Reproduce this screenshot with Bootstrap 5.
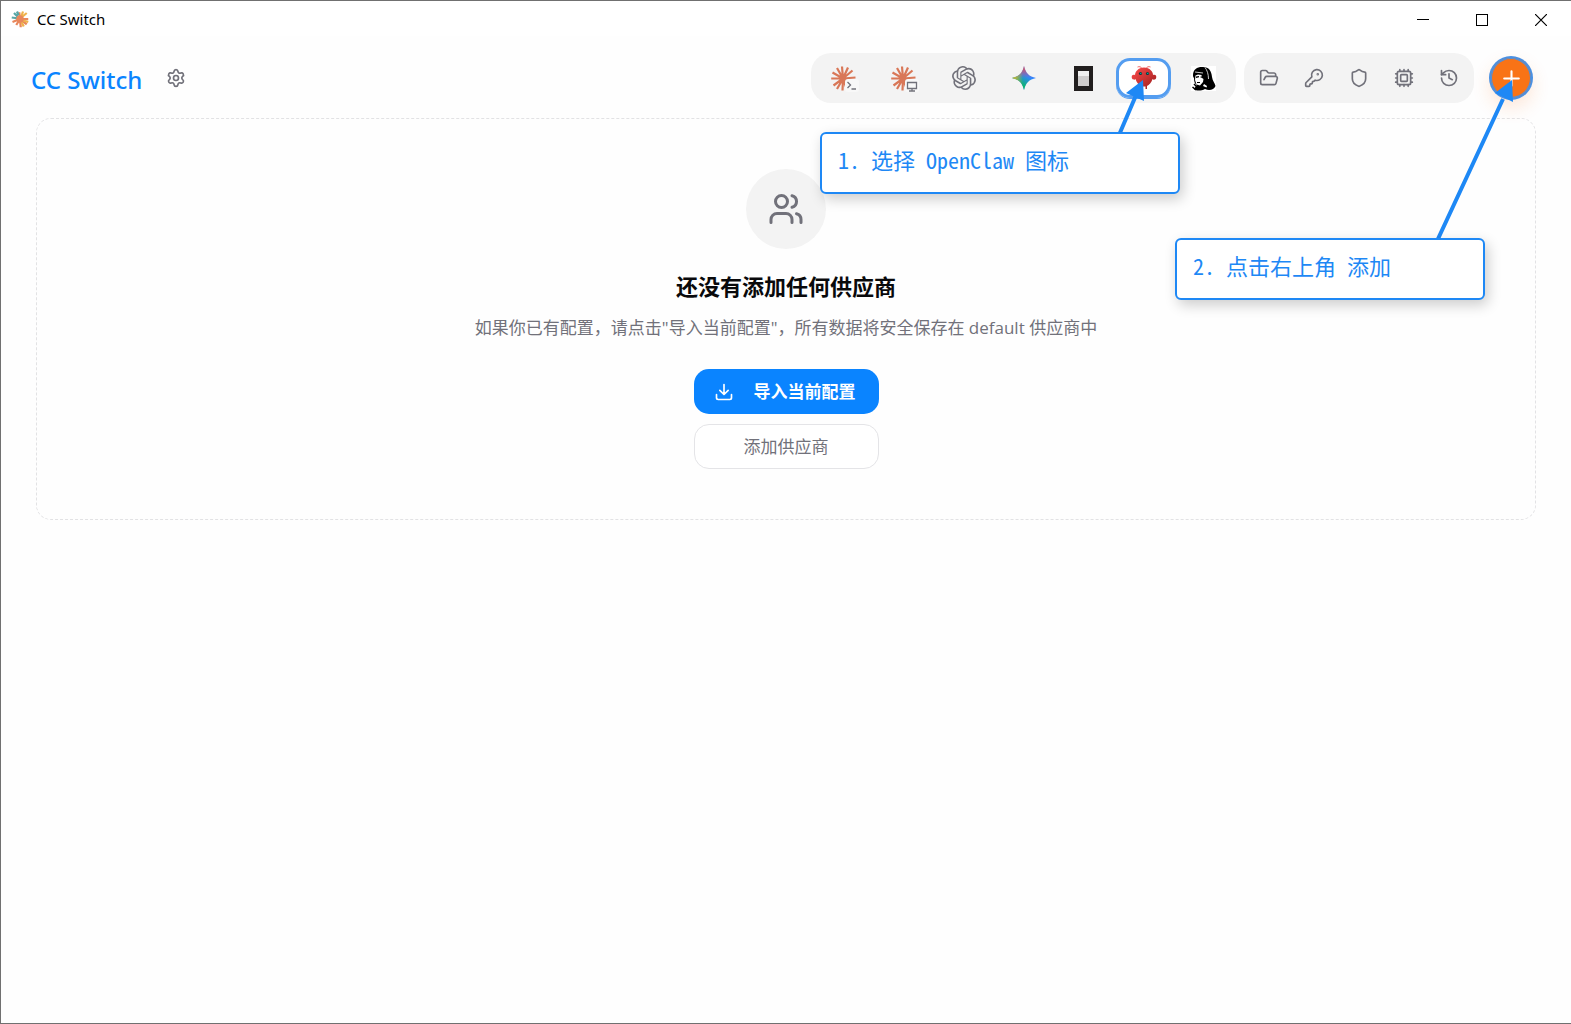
<!DOCTYPE html>
<html lang="zh-CN">
<head>
<meta charset="utf-8">
<meta name="viewport" content="width=device-width, initial-scale=1">
<title>CC Switch</title>
<link href="https://cdn.jsdelivr.net/npm/bootstrap@5.3.0/dist/css/bootstrap.min.css" rel="stylesheet">
<style>
:root{--ink:#71717a;--blue:#0a84ff;--note:#1e88f5;--soft:#f3f3f3}
body{font-family:"Open Sans","Noto Sans CJK SC",sans-serif;background:#fefefe;color:#09090b}
.app-window{min-height:100vh;border:solid #707070;border-width:1px 0 1px 1px}
.title-bar{height:35px;padding-left:10px;background:#fff}
.title-text{font:15px/20px "Noto Sans",sans-serif;color:#000}
.win-btn{width:59px;height:35px;padding:0 2px 0 0;border:0;background:none;color:#000}
.app-header{padding:17px 40px 15px 30px}
.brand{font:500 24px/32px "Noto Sans","Open Sans",sans-serif;padding-top:3px;color:var(--blue);text-decoration:none}
.tool-group{background:var(--soft);border-radius:20px;padding:5px;gap:5px}
.icon-btn{width:40px;height:40px;padding:0;border:0;border-radius:12px;background:none;color:var(--ink);display:flex;align-items:center;justify-content:center}
.gear-btn{margin-left:14px}
.app-btn{width:55px}
.app-btn.active{background:#fff;border-radius:14px;box-shadow:0 1px 0 0 #549df0,inset 0 0 0 3px #549df0}
.add-btn{border-radius:50%;margin-left:9px;background:#f97316;color:#fff;box-shadow:0 0 0 2px #4a90e2,inset 0 0 0 1px #4a90e2,0 8px 18px 2px rgba(249,115,22,.16)}
.line-icon{fill:none;stroke:currentColor;stroke-width:2;stroke-linecap:round;stroke-linejoin:round}
.empty-panel{margin:0 35px;padding:50px 20px;border:1px dashed #e2e2e4;border-radius:15px}
.empty-icon{width:80px;height:80px;background:var(--soft);color:var(--ink)}
.empty-title{font-size:22px;line-height:34px;font-weight:700;margin:20px 0 10px}
.empty-text{font-size:17px;line-height:30px;color:var(--ink);margin:0 0 26px}
.action-list{gap:10px}
.action-btn{width:185px;height:45px;padding:0 19px;border-radius:15px;font-size:17px;line-height:24px}
.btn-main{background:var(--blue);color:#fff;gap:20px;font-weight:700}
.btn-line{border:1px solid #e4e4e7;background:#fff;color:var(--ink)}
.callout-box{position:absolute;z-index:3;height:62px;padding:0 16px;border:2px solid var(--note);border-radius:6px;background:#fff;color:var(--note);box-shadow:3px 5px 14px rgba(0,0,0,.2);font:22px/50px "Noto Sans CJK SC",sans-serif;font-feature-settings:"hwid"}
.callout-pick{right:391px;top:131px;width:360px}
.callout-add{right:86px;top:237px;width:310px}
.arrows{position:absolute;right:40px;top:60px;z-index:2;pointer-events:none}
</style>
<script src="https://cdn.jsdelivr.net/npm/bootstrap@5.3.0/dist/js/bootstrap.bundle.min.js"></script>
</head>
<body>
<svg width="0" height="0" class="position-absolute" aria-hidden="true">
  <defs>
    <g id="burst" stroke="#d97757" stroke-width="2.200" stroke-linecap="butt">
      <path d="M12 12.500 11 .5M12 12.500 17 1.500M12 12.500 21.500 4.500M12 12.500 24.500 11.500M12 12.500 23.500 15.500M12 12.500 20 20.500M12 12.500 16 23.500M12 12.500 11.500 24.500M12 12.500 6 23M12 12.500 2.500 19.500M12 12.500 .2 12.500M12 12.500 1.500 6.500M12 12.500 6 2"/>
    </g>
    <linearGradient id="redBody" x1="0" y1="0" x2="1" y2="1"><stop offset="0" stop-color="#ff4d4d"/><stop offset="1" stop-color="#991b1b"/></linearGradient>
    <linearGradient id="gemRed" x1="0" y1="0" x2="0" y2="1"><stop offset="0" stop-color="#f94543"/><stop offset=".5" stop-color="#f94543" stop-opacity="0"/></linearGradient>
    <linearGradient id="gemYellow" x1="0" y1="0" x2="1" y2="0"><stop offset="0" stop-color="#fabc12"/><stop offset=".45" stop-color="#fabc12" stop-opacity="0"/></linearGradient>
    <linearGradient id="gemGreen" x1=".2" y1="1" x2=".6" y2=".3"><stop offset=".3" stop-color="#08b962"/><stop offset=".9" stop-color="#08b962" stop-opacity="0"/></linearGradient>
    <linearGradient id="frameFill" x1="0" y1="0" x2="0" y2="1"><stop offset="0" stop-color="#f0f0f0"/><stop offset=".35" stop-color="#f0f0f0"/><stop offset=".36" stop-color="#cfcdcd"/><stop offset="1" stop-color="#cfcdcd"/></linearGradient>
  </defs>
</svg>

<div class="app-window position-relative">
  <div class="title-bar d-flex align-items-center">
    <svg width="18" height="18" viewBox="0 0 24 24" stroke-width="3" aria-hidden="true">
      <path stroke="#e8875c" d="M12 12 11 3M12 12 23 12M12 12 21 19M12 12 13 23M12 12 2 16M12 12 7 20"/>
      <path stroke="#58a6a6" d="M9 9 4 4M8 11 1 10M10 7 8 2"/>
      <path stroke="#efb24c" d="M14 8 16 2M15 9 21 4M16 14 23 16M14 16 17 22"/>
      <circle cx="12" cy="12" r="5" fill="#e8875c"/>
    </svg>
    <span class="title-text ms-2 me-auto">CC Switch</span>
    <button class="win-btn" type="button" aria-label="最小化"><svg width="12" height="12" shape-rendering="crispEdges"><path d="M0 5.500H12" stroke="currentColor"/></svg></button>
    <button class="win-btn" type="button" aria-label="最大化"><svg width="12" height="12" shape-rendering="crispEdges"><path d="M.5 .5H11.500V11.500H.5Z" fill="none" stroke="currentColor"/></svg></button>
    <button class="win-btn" type="button" aria-label="关闭"><svg width="12" height="12"><path d="M0 0 12 12M12 0 0 12" stroke="currentColor" stroke-width="1.200"/></svg></button>
  </div>

  <header class="app-header d-flex align-items-center">
    <a class="brand" href="#">CC Switch</a>
    <button class="icon-btn gear-btn me-auto" type="button" aria-label="设置">
      <svg class="line-icon" width="20" height="20" viewBox="0 0 24 24"><path d="M9.671 4.136a2.340 2.340 0 0 1 4.659 0 2.340 2.340 0 0 0 3.319 1.915 2.340 2.340 0 0 1 2.330 4.033 2.340 2.340 0 0 0 0 3.831 2.340 2.340 0 0 1-2.330 4.033 2.340 2.340 0 0 0-3.319 1.915 2.340 2.340 0 0 1-4.659 0 2.340 2.340 0 0 0-3.320-1.915 2.340 2.340 0 0 1-2.330-4.033 2.340 2.340 0 0 0 0-3.831A2.340 2.340 0 0 1 6.350 6.051a2.340 2.340 0 0 0 3.319-1.915"/><circle cx="12" cy="12" r="3"/></svg>
    </button>

    <nav class="tool-group d-flex me-2" aria-label="应用">
      <button class="icon-btn app-btn" type="button" aria-label="Claude Code">
        <svg width="30" height="28" viewBox="-2 -2 30 28"><use href="#burst"/><rect x="14" y="13" width="14" height="13" rx="3" fill="#f8f8f8"/><path d="M16.500 16 19.500 19 16.500 22M20.500 23H25" fill="none" stroke="#71717a" stroke-width="1.300"/></svg>
      </button>
      <button class="icon-btn app-btn" type="button" aria-label="Claude Desktop">
        <svg width="30" height="28" viewBox="-2 -2 30 28"><use href="#burst"/><rect x="14" y="13" width="14" height="13" rx="3" fill="#f8f8f8"/><path d="M16.500 16.500H25.500V22.500H16.500ZM21 22.500V25M18 25H24" fill="none" stroke="#71717a" stroke-width="1.300"/></svg>
      </button>
      <button class="icon-btn app-btn" type="button" aria-label="Codex">
        <svg width="24" height="24" viewBox="0 0 24 24" fill="currentColor"><path d="M22.2819 9.8211a5.9847 5.9847 0 0 0-.5157-4.9108 6.0462 6.0462 0 0 0-6.5098-2.9A6.0651 6.0651 0 0 0 4.9807 4.1818a5.9847 5.9847 0 0 0-3.9977 2.9 6.0462 6.0462 0 0 0 .7427 7.0966 5.98 5.98 0 0 0 .511 4.9107 6.051 6.051 0 0 0 6.5146 2.9001A5.9847 5.9847 0 0 0 13.2599 24a6.0557 6.0557 0 0 0 5.7718-4.2058 5.9894 5.9894 0 0 0 3.9977-2.9001 6.0557 6.0557 0 0 0-.7475-7.0729zm-9.022 12.6081a4.4755 4.4755 0 0 1-2.8764-1.0408l.1419-.0804 4.7783-2.7582a.7948.7948 0 0 0 .3927-.6813v-6.7369l2.02 1.1686a.071.071 0 0 1 .038.052v5.5826a4.504 4.504 0 0 1-4.4945 4.4944zm-9.6607-4.1254a4.4708 4.4708 0 0 1-.5346-3.0137l.142.0852 4.783 2.7582a.7712.7712 0 0 0 .7806 0l5.8428-3.3685v2.3324a.0804.0804 0 0 1-.0332.0615L9.74 19.9502a4.4992 4.4992 0 0 1-6.1408-1.6464zM2.3408 7.8956a4.485 4.485 0 0 1 2.3655-1.9728V11.6a.7664.7664 0 0 0 .3879.6765l5.8144 3.3543-2.0201 1.1685a.0757.0757 0 0 1-.071 0l-4.8303-2.7865A4.504 4.504 0 0 1 2.3408 7.872zm16.5963 3.8558L13.1038 8.364 15.1192 7.2a.0757.0757 0 0 1 .071 0l4.8303 2.7913a4.4944 4.4944 0 0 1-.6765 8.1042v-5.6772a.79.79 0 0 0-.407-.667zm2.0107-3.0231l-.142-.0852-4.7735-2.7818a.7759.7759 0 0 0-.7854 0L9.409 9.2297V6.8974a.0662.0662 0 0 1 .0284-.0615l4.8303-2.7866a4.4992 4.4992 0 0 1 6.6802 4.66zM8.3065 12.863l-2.02-1.1638a.0804.0804 0 0 1-.038-.0567V6.0742a4.4992 4.4992 0 0 1 7.3757-3.4537l-.142.0805L8.704 5.459a.7948.7948 0 0 0-.3927.6813zm1.0976-2.3654l2.602-1.4998 2.6069 1.4998v2.9994l-2.5974 1.4997-2.6067-1.4997Z"/></svg>
      </button>
      <button class="icon-btn app-btn" type="button" aria-label="Gemini">
        <svg width="24" height="24" viewBox="0 0 24 24"><path fill="#3186ff" d="M12 0C13.500 7 17 10.500 24 12 17 13.500 13.500 17 12 24 10.500 17 7 13.500 0 12 7 10.500 10.500 7 12 0Z"/><path fill="url(#gemGreen)" d="M12 0C13.500 7 17 10.500 24 12 17 13.500 13.500 17 12 24 10.500 17 7 13.500 0 12 7 10.500 10.500 7 12 0Z"/><path fill="url(#gemRed)" d="M12 0C13.500 7 17 10.500 24 12 17 13.500 13.500 17 12 24 10.500 17 7 13.500 0 12 7 10.500 10.500 7 12 0Z"/><path fill="url(#gemYellow)" d="M12 0C13.500 7 17 10.500 24 12 17 13.500 13.500 17 12 24 10.500 17 7 13.500 0 12 7 10.500 10.500 7 12 0Z"/></svg>
      </button>
      <button class="icon-btn app-btn" type="button" aria-label="OpenCode">
        <svg width="20" height="25" viewBox="0 0 20 25"><path fill="#211e1e" d="M0 0H19V25H0Z"/><path fill="url(#frameFill)" d="M4 5H15V20H4Z"/></svg>
      </button>
      <button class="icon-btn app-btn active" type="button" aria-label="OpenClaw" aria-pressed="true">
        <svg width="26" height="26" viewBox="0 0 26 26"><path d="M11 3.500C10 1.800 8.500 1.200 6.500 2M15 3.500C16 1.800 17.500 1.200 19.500 2" fill="none" stroke="#f36a6a" stroke-width="1"/><path fill="url(#redBody)" d="M13 2.500C19 2.500 22 7 22 10 24.500 9 26 11 25 13.500 24 15 22 15 21.500 14 20.500 17.500 18 20 16 21V24H14.500V21.500H11.500V24H10V21C8 20 5.500 17.500 4.500 14 4 15 2 15 1 13.500 0 11 1.500 9 4 10 4 7 7 2.500 13 2.500Z"/><circle cx="9.500" cy="8.500" r="1.600" fill="#0b3a40"/><circle cx="16.500" cy="8.500" r="1.600" fill="#0b3a40"/><circle cx="9.800" cy="8.300" r=".6" fill="#00e5cc"/><circle cx="16.800" cy="8.300" r=".6" fill="#00e5cc"/></svg>
      </button>
      <button class="icon-btn app-btn" type="button" aria-label="Hermes">
        <svg width="25" height="25" viewBox="0 0 25 25"><path fill="#fff" d="M0 0H25V25H0Z"/><path d="M2 9C2 3 7 .5 12 1 18 1 20.500 5 21 11 21.500 15 24 17 24.500 20 23 24 18 25 14 23 10 25 5 25 3 23 4 21 5 20 6 19 4 18 3 16 3 12 2 11 2 10 2 9Z"/><path fill="#fff" d="M4.500 9.500 7 8.500 10.500 9 11 12 12.500 13 12 16 9 19.500 5.500 18.500 4 14ZM13 18 16 20 15.500 21.500 12 20Z"/><path d="M5 10.500 8 10V11.200L5 12ZM9.500 10.500 12 10.500V12L9.500 11.500ZM6 16H9V17H6Z"/><path d="M14 1.500C16 4 17.500 8 17.500 13M4 6 12 7" stroke="#ddd" fill="none" stroke-width=".9"/><path d="M3 18 7 22M1.500 21 5 24" stroke="#000" stroke-width="1.500"/></svg>
      </button>
    </nav>

    <div class="tool-group d-flex me-2" role="toolbar" aria-label="工具">
      <button class="icon-btn" type="button" aria-label="工作区"><svg class="line-icon" width="20" height="20" viewBox="0 0 24 24"><path d="m6 14 1.500-2.900A2 2 0 0 1 9.240 10H20a2 2 0 0 1 1.940 2.500l-1.540 6a2 2 0 0 1-1.950 1.500H4a2 2 0 0 1-2-2V5a2 2 0 0 1 2-2h3.900a2 2 0 0 1 1.690.9l.81 1.200a2 2 0 0 0 1.670.9H18a2 2 0 0 1 2 2v2"/></svg></button>
      <button class="icon-btn" type="button" aria-label="密钥"><svg class="line-icon" width="20" height="20" viewBox="0 0 24 24"><path d="M2.586 17.414A2 2 0 0 0 2 18.828V21a1 1 0 0 0 1 1h3a1 1 0 0 0 1-1v-1a1 1 0 0 1 1-1h1a1 1 0 0 0 1-1v-1a1 1 0 0 1 1-1h.172a2 2 0 0 0 1.414-.586l.814-.814a6.500 6.500 0 1 0-4-4z"/><circle cx="16.500" cy="7.500" r=".5" fill="currentColor"/></svg></button>
      <button class="icon-btn" type="button" aria-label="安全"><svg class="line-icon" width="20" height="20" viewBox="0 0 24 24"><path d="M20 13c0 5-3.500 7.500-7.660 8.950a1 1 0 0 1-.67-.01C7.500 20.500 4 18 4 13V6a1 1 0 0 1 1-1c2 0 4.500-1.200 6.240-2.720a1.170 1.170 0 0 1 1.520 0C14.510 3.810 17 5 19 5a1 1 0 0 1 1 1z"/></svg></button>
      <button class="icon-btn" type="button" aria-label="智能体"><svg class="line-icon" width="20" height="20" viewBox="0 0 24 24"><rect x="4" y="4" width="16" height="16" rx="2"/><rect x="8" y="8" width="8" height="8" rx="1"/><path d="M12 20v2M12 2v2M17 20v2M17 2v2M2 12h2M2 17h2M2 7h2M20 12h2M20 17h2M20 7h2M7 20v2M7 2v2"/></svg></button>
      <button class="icon-btn" type="button" aria-label="历史"><svg class="line-icon" width="20" height="20" viewBox="0 0 24 24"><path d="M3 12a9 9 0 1 0 9-9 9.750 9.750 0 0 0-6.740 2.740L3 8"/><path d="M3 3v5h5"/><path d="M12 7v5l4 2"/></svg></button>
    </div>

    <button class="icon-btn add-btn" type="button" aria-label="添加"><svg class="line-icon" width="25" height="25" viewBox="0 0 24 24"><path d="M5 12h14M12 5v14"/></svg></button>
  </header>

  <main class="empty-panel d-flex flex-column align-items-center text-center">
    <div class="empty-icon rounded-circle d-flex align-items-center justify-content-center">
      <svg class="line-icon" width="36" height="36" viewBox="0 0 24 24" aria-hidden="true"><path d="M16 21v-2a4 4 0 0 0-4-4H6a4 4 0 0 0-4 4v2"/><circle cx="9" cy="7" r="4"/><path d="M22 21v-2a4 4 0 0 0-3-3.870M16 3.130a4 4 0 0 1 0 7.750"/></svg>
    </div>
    <h1 class="empty-title">还没有添加任何供应商</h1>
    <p class="empty-text">如果你已有配置，请点击"导入当前配置"，所有数据将安全保存在 default 供应商中</p>
    <div class="action-list d-flex flex-column">
      <button class="btn action-btn btn-main d-flex align-items-center" type="button"><svg class="line-icon" width="20" height="20" viewBox="0 0 24 24"><path d="M12 15V3M21 15v4a2 2 0 0 1-2 2H5a2 2 0 0 1-2-2v-4M7 10l5 5 5-5"/></svg>导入当前配置</button>
      <button class="btn action-btn btn-line" type="button">添加供应商</button>
    </div>
  </main>

  <svg class="arrows" width="431" height="180" viewBox="1100 60 431 180" aria-hidden="true">
    <g fill="#1e88f5" stroke="#1e88f5">
      <path d="M1119 134 1137 92M1437 240 1503 98" stroke-width="4"/>
      <path stroke="none" d="M1143 79 1126 92 1144 100ZM1512 79 1495 92 1513 101Z"/>
    </g>
  </svg>
  <div class="callout-box callout-pick">1. 选择 OpenClaw 图标</div>
  <div class="callout-box callout-add">2. 点击右上角 添加</div>
</div>
</body>
</html>
